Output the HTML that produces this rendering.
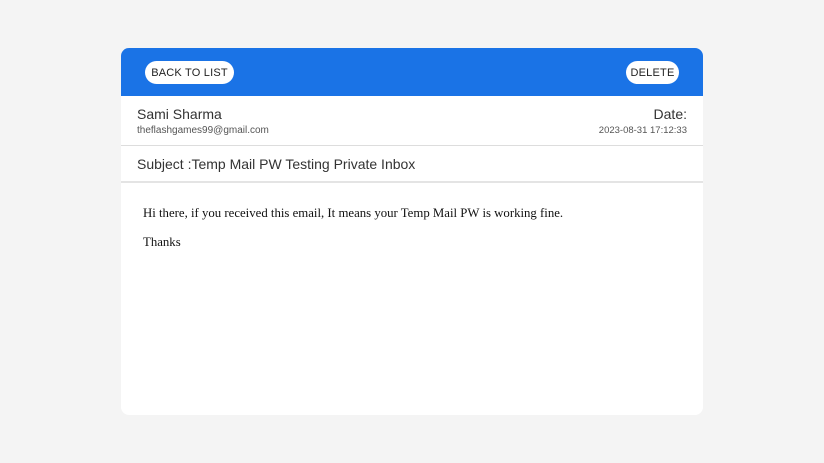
<!DOCTYPE html>
<html><head><style>
*{margin:0;padding:0;box-sizing:border-box}
body{width:824px;height:463px;background:#f4f4f4;font-family:"Liberation Sans",sans-serif;position:relative;overflow:hidden}
.card{position:absolute;left:121px;top:48px;width:582px;height:367px;background:#fff;border-radius:8px;overflow:hidden}
.hd{height:48px;background:#1a73e6;position:relative}
.pill{position:absolute;top:13px;height:23px;background:#fff;border-radius:12px;font-size:11px;color:#222;line-height:24px;text-align:center;letter-spacing:.2px}
.row1{height:50px;border-bottom:1px solid #ddd;position:relative}
.name{position:absolute;left:16px;top:10px;font-size:14px;color:#333}
.mail{position:absolute;left:16px;top:29px;font-size:10px;color:#555}
.date{position:absolute;right:16px;top:10px;font-size:14px;color:#333}
.dt{position:absolute;right:16px;top:29px;font-size:9.5px;color:#555}
.subj{height:37px;border-bottom:2px solid #e4e4e4;padding:10px 16px;font-size:14px;color:#333}
.body{padding:23px 22px;font-family:"Liberation Serif",serif;font-size:12.8px;color:#111}
.body p{margin-bottom:14px}
</style></head><body>
<div class="card">
<div class="hd"><div class="pill" style="left:24px;width:89px">BACK TO LIST</div><div class="pill" style="left:505px;width:53px">DELETE</div></div>
<div class="row1"><div class="name">Sami Sharma</div><div class="mail">theflashgames99@gmail.com</div><div class="date">Date:</div><div class="dt">2023-08-31 17:12:33</div></div>
<div class="subj">Subject :Temp Mail PW Testing Private Inbox</div>
<div class="body"><p>Hi there, if you received this email, It means your Temp Mail PW is working fine.</p><p>Thanks</p></div>
</div>
</body></html>
